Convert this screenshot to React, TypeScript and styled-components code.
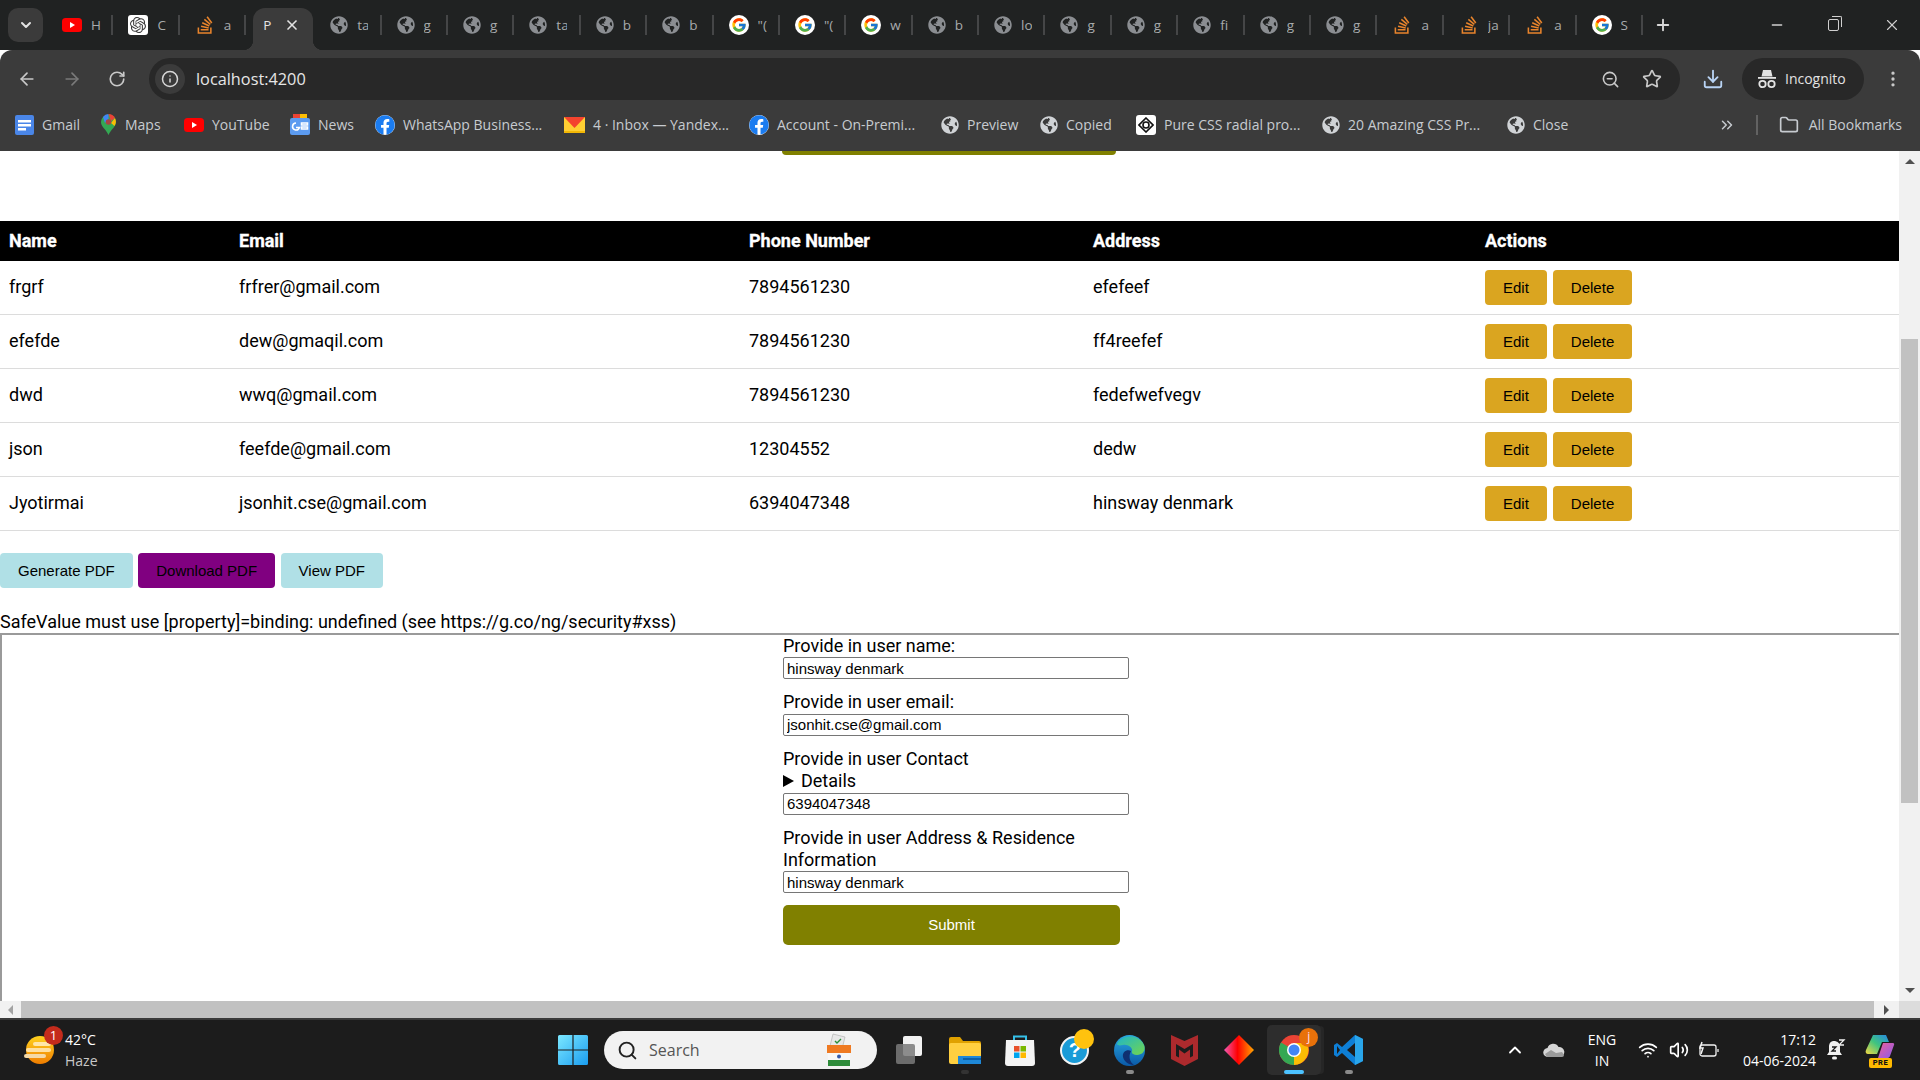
import React from "react";
import styled, { createGlobalStyle } from "styled-components";
import {
  ArrowLeft,
  ArrowRight,
  ChevronDown,
  ChevronUp,
  ChevronsRight,
  Download,
  Folder,
  Info,
  Minus,
  MoreVertical,
  Plus,
  RotateCw,
  Search,
  Star,
  Volume2,
  Wifi,
  X,
  ZoomOut,
} from "lucide-react";
import { FaFacebook, FaGlobeAmericas, FaStackOverflow } from "react-icons/fa";
import { FcGoogle } from "react-icons/fc";
import { SiOpenai } from "react-icons/si";

const GlobalStyle = createGlobalStyle`
  html, body {
    margin: 0;
    padding: 0;
    width: 1920px;
    height: 1080px;
    overflow: hidden;
    background: #fff;
  }
  * { box-sizing: border-box; }
  svg { flex-shrink: 0; }
`;

const Screen = styled.div`
  width: 1920px;
  height: 1080px;
  display: flex;
  flex-direction: column;
  font-family: Roboto, "Liberation Sans", sans-serif;
`;

/* ---------- browser chrome ---------- */

const TabStrip = styled.div`
  height: 50px;
  background: #202222;
  display: flex;
  align-items: flex-end;
  padding-left: 8px;
  flex-shrink: 0;
`;

const TabSearch = styled.div`
  width: 35px;
  height: 34px;
  margin: 0 4px 8px 0;
  border-radius: 10px;
  background: #3b3b3b;
  color: #e3e3e3;
  display: flex;
  align-items: center;
  justify-content: center;
`;

const Tab = styled.div`
  position: relative;
  width: 66.4px;
  height: 42px;
  display: flex;
  align-items: center;
  flex-shrink: 0;
  gap: 9px;
  padding-left: 15px;
  padding-bottom: 8px;
  font-family: "Open Sans", sans-serif;
  font-size: 13.5px;
  color: #a8abad;
  &::after {
    content: "";
    position: absolute;
    right: 0;
    top: 7px;
    width: 2px;
    height: 20px;
    background: #454647;
  }
`;

const ActiveTab = styled.div`
  position: relative;
  width: 60px;
  height: 42px;
  margin: 0 2px 0 7px;
  flex-shrink: 0;
  padding: 0 13px 8px 10px;
  display: flex;
  align-items: center;
  justify-content: space-between;
  background: #3b3b3b;
  border-radius: 12px 12px 0 0;
  color: #e3e3e3;
  font-family: "Open Sans", sans-serif;
  font-size: 13.5px;
  &::before,
  &::after {
    content: "";
    position: absolute;
    bottom: 0;
    width: 10px;
    height: 10px;
  }
  &::before {
    left: -10px;
    background: radial-gradient(circle at 0 0, transparent 10px, #3b3b3b 10.5px);
  }
  &::after {
    right: -10px;
    background: radial-gradient(circle at 100% 0, transparent 10px, #3b3b3b 10.5px);
  }
`;

const TabLabel = styled.span`
  width: 11px;
  overflow: hidden;
  white-space: nowrap;
`;

const NewTab = styled.div`
  width: 30px;
  height: 50px;
  margin-left: 5px;
  color: #d8d8d8;
  display: flex;
  align-items: center;
  justify-content: center;
`;

const WindowControls = styled.div`
  margin-left: auto;
  height: 50px;
  display: flex;
  align-items: center;
  color: #d0d0d0;
`;

const WindowButton = styled.div`
  width: 56px;
  display: flex;
  justify-content: center;
  &:last-child {
    margin-left: 3px;
  }
`;

const RestoreIcon = styled.div`
  position: relative;
  width: 11px;
  height: 12px;
  border: 1.5px solid #d0d0d0;
  border-radius: 2px;
  &::after {
    content: "";
    position: absolute;
    top: -4px;
    right: -4px;
    width: 9px;
    height: 10px;
    border-top: 1.5px solid #d0d0d0;
    border-right: 1.5px solid #d0d0d0;
    border-radius: 0 2px 0 0;
  }
`;

const Toolbar = styled.div`
  height: 50px;
  background: #3b3b3b;
  border-radius: 12px 12px 0 0;
  display: flex;
  align-items: flex-start;
  padding: 8px 0 0 4px;
  flex-shrink: 0;
`;

const NavButton = styled.div<{ $dim?: boolean }>`
  width: 45px;
  height: 42px;
  display: flex;
  align-items: center;
  justify-content: center;
  color: ${(p) => (p.$dim ? "#7a7a7a" : "#c9c9c9")};
`;

const DownloadButton = styled(NavButton)`
  margin-left: 10px;
`;

const MenuButton = styled(NavButton)`
  width: 56px;
  padding-left: 2px;
`;

const AddressBar = styled.div`
  width: 1531px;
  height: 42px;
  margin-left: 10px;
  background: #282828;
  border-radius: 21px;
  display: flex;
  align-items: center;
  padding: 0 18px 0 6px;
  color: #e3e3e3;
`;

const InfoPill = styled.div`
  width: 30px;
  height: 30px;
  border-radius: 50%;
  background: #3b3b3b;
  display: flex;
  align-items: center;
  justify-content: center;
  color: #d8d8d8;
`;

const UrlText = styled.span`
  margin-left: 11px;
  font-family: "Open Sans", sans-serif;
  font-size: 16.3px;
  color: #e6e6e6;
`;

const AddressActions = styled.div`
  margin-left: auto;
  display: flex;
  gap: 22px;
  color: #c9c9c9;
  align-items: center;
`;

const IncognitoPill = styled.div`
  width: 122px;
  height: 42px;
  margin-left: 7px;
  padding: 0 0 1px 15px;
  background: #282828;
  border-radius: 21px;
  display: flex;
  align-items: center;
  gap: 8px;
  color: #e3e3e3;
  font-family: "Open Sans", sans-serif;
  font-size: 14px;
`;

const BookmarkBar = styled.div`
  height: 51px;
  background: #3b3b3b;
  display: flex;
  align-items: center;
  padding-left: 15px;
  flex-shrink: 0;
  font-family: "Open Sans", sans-serif;
  font-size: 14px;
  color: #c7cbd0;
  padding-bottom: 2px;
`;

const Bookmark = styled.div<{ $w: number }>`
  width: ${(p) => p.$w}px;
  display: flex;
  align-items: center;
  gap: 8px;
  white-space: nowrap;
  flex-shrink: 0;
`;

const BookmarkEnd = styled.div`
  margin-left: auto;
  display: flex;
  align-items: center;
  padding-right: 18px;
  gap: 10px;
`;

const BarDivider = styled.div`
  width: 2px;
  height: 20px;
  background: #626262;
  margin: 0 11px 0 10px;
`;

const WhiteChip = styled.span<{ $round?: boolean }>`
  width: 20px;
  height: 20px;
  background: #fff;
  border-radius: ${(p) => (p.$round ? "50%" : "3px")};
  display: inline-flex;
  align-items: center;
  justify-content: center;
  flex-shrink: 0;
`;

/* ---------- page ---------- */

const Viewport = styled.div`
  height: 850px;
  display: flex;
  flex-shrink: 0;
`;

const Page = styled.div`
  width: 1899px;
  height: 850px;
  overflow: hidden;
  background: #fff;
  color: #000;
`;

const CutOffButton = styled.div`
  width: 334px;
  height: 4px;
  margin-left: 782px;
  background: #808000;
  border-radius: 0 0 4px 4px;
`;

const Table = styled.table`
  width: 1899px;
  margin-top: 66px;
  border-collapse: separate;
  border-spacing: 0;
  table-layout: fixed;
  font-size: 18px;
`;

const HeadCell = styled.th`
  height: 40px;
  background: #000;
  color: #fff;
  text-align: left;
  font-weight: 700;
  padding: 0 8px 1px;
  -webkit-text-stroke: 0.3px #fff;
  &:first-child {
    padding-left: 9px;
  }
`;

const Cell = styled.td`
  height: 54px;
  padding: 0 8px 2px;
  border-bottom: 1px solid #dcdcdc;
  &:first-child {
    padding-left: 9px;
  }
`;

const ActionCell = styled(Cell)`
  padding-bottom: 0;
`;

const Row = styled.tr``;

const ButtonBase = styled.button`
  height: 35px;
  padding: 0 18px;
  border: none;
  border-radius: 4px;
  font-family: "Liberation Sans", Arial, sans-serif;
  font-size: 15px;
  color: #000;
  vertical-align: middle;
`;

const ActionButton = styled(ButtonBase)`
  background: #daa520;
  & + & {
    margin-left: 6px;
  }
`;

const PdfRow = styled.div`
  display: flex;
  gap: 5.5px;
  margin-top: 22px;
`;

const PdfButton = styled(ButtonBase)<{ $tone: "blue" | "purple" }>`
  background: ${(p) => (p.$tone === "purple" ? "#800080" : "#b0e0e6")};
`;

const SafeValue = styled.div`
  margin-top: 22px;
  font-size: 18px;
  line-height: 23px;
  height: 23px;
  white-space: nowrap;
`;

const FrameBox = styled.div`
  height: 400px;
  border-top: 2px solid #9a9a9a;
  border-left: 2px solid #9a9a9a;
  padding-left: 781px;
  font-size: 18px;
`;

const Form = styled.form`
  width: 346px;
`;

const Field = styled.div`
  margin-bottom: 12px;
`;

const Label = styled.div`
  line-height: 22.4px;
`;

const DetailsLine = styled.div`
  display: flex;
  align-items: center;
  gap: 7px;
  line-height: 22.4px;
  &::before {
    content: "";
    width: 0;
    height: 0;
    border-left: 11px solid #000;
    border-top: 6px solid transparent;
    border-bottom: 6px solid transparent;
  }
`;

const TextInput = styled.input`
  display: block;
  width: 346px;
  height: 22px;
  padding: 1px 3px;
  border: 1px solid #767676;
  border-radius: 2px;
  font-family: "Liberation Sans", Arial, sans-serif;
  font-size: 15px;
  color: #000;
  background: #fff;
`;

const SubmitButton = styled.button`
  width: 337px;
  height: 40px;
  padding: 0 0 2px;
  border: none;
  border-radius: 5px;
  background: #808000;
  color: #fff;
  font-family: "Liberation Sans", Arial, sans-serif;
  font-size: 15px;
`;

const VScroll = styled.div`
  width: 21px;
  background: #f1f1f1;
  display: flex;
  flex-direction: column;
  align-items: center;
`;

const ArrowBox = styled.div`
  height: 21px;
  flex-shrink: 0;
  display: flex;
  align-items: center;
  justify-content: center;
  width: 21px;
`;

const VThumb = styled.div`
  width: 17px;
  height: 464px;
  margin-top: 167px;
  background: #c1c1c1;
`;

const VSpacer = styled.div`
  flex: 1;
`;

const Triangle = styled.div<{ $dir: "up" | "down" | "left" | "right" }>`
  width: 0;
  height: 0;
  ${(p) =>
    p.$dir === "up"
      ? "border-left:5px solid transparent;border-right:5px solid transparent;border-bottom:5px solid #505050;"
      : p.$dir === "down"
        ? "border-left:5px solid transparent;border-right:5px solid transparent;border-top:5px solid #505050;"
        : p.$dir === "left"
          ? "border-top:5px solid transparent;border-bottom:5px solid transparent;border-right:5px solid #a3a3a3;"
          : "border-top:5px solid transparent;border-bottom:5px solid transparent;border-left:5px solid #505050;"}
`;

const HScroll = styled.div`
  height: 17px;
  flex-shrink: 0;
  display: flex;
  background: #f1f1f1;
`;

const HThumb = styled.div`
  width: 1853px;
  background: #c1c1c1;
`;

const HArrow = styled.div<{ $w: number }>`
  width: ${(p) => p.$w}px;
  display: flex;
  align-items: center;
  justify-content: center;
`;

const ScrollCorner = styled.div`
  width: 21px;
  background: #dcdcdc;
`;

/* ---------- taskbar ---------- */

const Taskbar = styled.div`
  height: 62px;
  flex-shrink: 0;
  background: #1c1c1c;
  border-top: 2px solid #3a3a3a;
  display: flex;
  align-items: center;
  color: #fff;
  font-family: "Open Sans", sans-serif;
`;

const WeatherBlock = styled.div`
  width: 545px;
  padding-left: 24px;
  display: flex;
  align-items: center;
  gap: 11px;
  flex-shrink: 0;
`;

const WeatherIcon = styled.div`
  position: relative;
  width: 30px;
  height: 34px;
`;

const CountBadge = styled.span`
  position: absolute;
  top: -7px;
  right: -9px;
  width: 19px;
  height: 19px;
  border-radius: 50%;
  background: #c42b1c;
  color: #fff;
  font-size: 13px;
  line-height: 19px;
  text-align: center;
`;

const WeatherText = styled.div`
  font-size: 14px;
  line-height: 21px;
  color: #fff;
`;

const Muted = styled.div`
  color: #c8c8c8;
`;

const StartSlot = styled.div`
  width: 55px;
  display: flex;
  justify-content: center;
`;

const SearchPill = styled.div`
  width: 273px;
  height: 38px;
  margin: 0 6px 0 4px;
  background: #f2f2f2;
  border-radius: 19px;
  display: flex;
  align-items: center;
  padding: 0 24px 0 13px;
  gap: 11px;
  color: #555;
  font-size: 16px;
`;

const SearchArt = styled.div`
  margin-left: auto;
  display: flex;
`;

const TaskSlot = styled.div<{ $open?: boolean }>`
  position: relative;
  width: 54.8px;
  height: 50px;
  display: flex;
  align-items: center;
  justify-content: center;
  border-radius: 5px;
  ${(p) => (p.$open ? "background:#2d2d2d;box-shadow:4px 0 0 -1px #262626;" : "")}
`;

const RunDot = styled.span<{ $kind?: "active" | "faint" }>`
  position: absolute;
  bottom: 1px;
  left: 50%;
  transform: translateX(-50%);
  width: ${(p) => (p.$kind === "active" ? "20px" : "8px")};
  height: 4px;
  border-radius: 2px;
  background: ${(p) => (p.$kind === "active" ? "#4cc2ff" : p.$kind === "faint" ? "#333" : "#8a8a8a")};
`;

const HelpMark = styled.span`
  width: 29px;
  height: 29px;
  border-radius: 50%;
  border: 2px solid #f3f3f3;
  background: #1a9bd7;
  color: #fff;
  font-weight: 700;
  font-size: 20px;
  line-height: 25px;
  text-align: center;
  font-family: "Liberation Sans", sans-serif;
`;

const YellowDot = styled.span`
  position: absolute;
  top: 4px;
  right: 8px;
  width: 20px;
  height: 20px;
  border-radius: 50%;
  background: #ffc20e;
`;

const ProfileBadge = styled.span`
  position: absolute;
  top: 3px;
  right: 3px;
  width: 19px;
  height: 19px;
  border-radius: 50%;
  background: #e8710a;
  color: #fde;
  font-size: 12px;
  line-height: 18px;
  text-align: center;
`;

const Tray = styled.div`
  margin-left: auto;
  width: 420px;
  height: 100%;
  display: flex;
  align-items: center;
  flex-shrink: 0;
`;

const TrayIcon = styled.div<{ $w: number }>`
  width: ${(p) => p.$w}px;
  display: flex;
  justify-content: center;
  flex-shrink: 0;
`;

const LangBlock = styled.div`
  width: 48px;
  text-align: center;
  font-size: 14px;
  line-height: 21px;
`;

const ClockBlock = styled.div`
  width: 86px;
  text-align: right;
  font-size: 14px;
  line-height: 21px;
`;

const CopilotBox = styled.div`
  position: relative;
  width: 30px;
  height: 32px;
`;

const PreBadge = styled.span`
  position: absolute;
  left: 4px;
  bottom: -2px;
  width: 23px;
  height: 10px;
  border-radius: 2px;
  background: #ffb900;
  color: #111;
  font-size: 7.5px;
  font-weight: 800;
  line-height: 10px;
  letter-spacing: 0.6px;
  text-align: center;
  font-family: Roboto, sans-serif;
`;

/* ---------- drawings ---------- */

const Globe = () => <FaGlobeAmericas size={18} color="#d0d3d6" />;
const DimGlobe = () => <FaGlobeAmericas size={18} color="#8b8e92" />;

const Google = () => (
  <WhiteChip $round>
    <FcGoogle size={16} />
  </WhiteChip>
);

const YouTube = () => (
  <svg width="20" height="14" viewBox="0 0 20 14">
    <rect width="20" height="14" rx="3.5" fill="#f00" />
    <path d="M8 4l5 3-5 3z" fill="#fff" />
  </svg>
);

const OpenAi = () => (
  <WhiteChip>
    <SiOpenai size={16} color="#3b3b3b" />
  </WhiteChip>
);

const Stack = () => <FaStackOverflow size={20} color="#e8842c" />;

const Facebook = () => (
  <WhiteChip $round>
    <FaFacebook size={20} color="#1b7cf0" />
  </WhiteChip>
);

const DocsIcon = () => (
  <svg width="19" height="20" viewBox="0 0 19 20">
    <rect width="19" height="20" rx="2" fill="#4a86e8" />
    <path d="M3 5h13v2.4H3zM3 9h13v2.4H3zM3 13h8v2.4H3z" fill="#fff" />
  </svg>
);

const MapsIcon = () => (
  <svg width="17" height="21" viewBox="0 0 17 21">
    <path d="M8.5 21C6 15 1 13 1 8a7.5 7.5 0 0 1 15 0c0 5-5 7-7.5 13z" fill="#34a853" />
    <path d="M3 3a7.5 7.5 0 0 1 5.5-3v5L5 9z" fill="#4285f4" />
    <path d="M8.5 0A7.5 7.5 0 0 1 15 4l-4 3z" fill="#ea4335" />
    <path d="M15 4c1.5 3 1 5.5-.5 8L11 9z" fill="#fbbc04" />
    <circle cx="8.5" cy="8" r="2.8" fill="#a44" />
  </svg>
);

const NewsIcon = () => (
  <svg width="20" height="21" viewBox="0 0 20 21">
    <path d="M3 0h14v8H3z" fill="#34a853" />
    <path d="M3 0h7v4H3z" fill="#ea4335" />
    <path d="M10 0h7v4h-7z" fill="#fbbc04" />
    <rect y="4" width="20" height="17" rx="2" fill="#5c9bf0" />
    <path d="M11.5 9h6v2h-6zM11.5 13h6v2h-6zM6 9a3.5 3.5 0 1 0 3.4 4.5H6" fill="none" stroke="#fff" strokeWidth="1.6" />
  </svg>
);

const YandexMail = () => (
  <svg width="21" height="16" viewBox="0 0 21 16">
    <rect width="21" height="16" fill="#ffcf33" />
    <path d="M0 0h21L10.5 11z" fill="#f4442e" />
    <path d="M0 14h21v2H0z" fill="#f2b705" />
  </svg>
);

const PureCss = () => (
  <WhiteChip>
    <svg width="16" height="16" viewBox="0 0 16 16" fill="none" stroke="#111" strokeWidth="1.6">
      <path d="M8 1l7 7-7 7-7-7z" />
      <circle cx="8" cy="8" r="3" />
    </svg>
  </WhiteChip>
);

const IncognitoIcon = () => (
  <svg width="20" height="20" viewBox="0 0 20 20" fill="#e3e3e3">
    <path d="M6 1h8l1.5 6.5h-11z" />
    <rect x="1" y="8" width="18" height="1.8" />
    <circle cx="5.5" cy="15" r="3.2" fill="none" stroke="#e3e3e3" strokeWidth="1.8" />
    <circle cx="14.5" cy="15" r="3.2" fill="none" stroke="#e3e3e3" strokeWidth="1.8" />
  </svg>
);

const WeatherArt = () => (
  <svg width="30" height="34" viewBox="0 0 30 34">
    <defs>
      <linearGradient id="sun" x1="0" y1="0" x2="0" y2="1">
        <stop offset="0" stopColor="#ffd21f" />
        <stop offset="1" stopColor="#ef7d00" />
      </linearGradient>
    </defs>
    <circle cx="16" cy="17" r="14" fill="url(#sun)" />
    <rect x="9" y="9" width="18" height="4" rx="2" fill="#ffe6a8" />
    <rect x="2" y="15" width="25" height="4" rx="2" fill="#ffe0a0" />
    <rect x="0" y="21" width="22" height="4" rx="2" fill="#f5d9a6" />
  </svg>
);

const WinLogo = () => (
  <svg width="30" height="30" viewBox="0 0 30 30">
    <defs>
      <linearGradient id="win" x1="0" y1="0" x2="1" y2="1">
        <stop offset="0" stopColor="#7ce8ff" />
        <stop offset="1" stopColor="#1a9df0" />
      </linearGradient>
    </defs>
    <path d="M0 1.5A1.5 1.5 0 0 1 1.5 0H14.4V14.4H0zM15.6 0H28.5A1.5 1.5 0 0 1 30 1.5V14.4H15.6zM0 15.6H14.4V30H1.5A1.5 1.5 0 0 1 0 28.5zM15.6 15.6H30V28.5A1.5 1.5 0 0 1 28.5 30H15.6z" fill="url(#win)" />
  </svg>
);

const BallotBox = () => (
  <svg width="28" height="34" viewBox="0 0 28 34">
    <path d="M8 1l12 3-3 12-12-3z" fill="#e8e8e8" stroke="#aaa" strokeWidth=".6" />
    <path d="M10 8l2 2 4-4" stroke="#2a8f3a" strokeWidth="1.4" fill="none" />
    <rect x="2" y="12" width="24" height="8" fill="#ef7a22" />
    <rect x="3" y="20" width="22" height="7" fill="#f7f7f7" />
    <rect x="3" y="27" width="22" height="6" fill="#2e8b3a" />
    <circle cx="14" cy="23.5" r="2" fill="#3558a8" />
  </svg>
);

const TaskView = () => (
  <svg width="30" height="30" viewBox="0 0 30 30">
    <rect x="8" y="1" width="19" height="20" rx="2" fill="#f2f2f2" />
    <rect x="1" y="9" width="19" height="20" rx="2" fill="#7a7a7a" fillOpacity=".85" />
  </svg>
);

const ExplorerIcon = () => (
  <svg width="32" height="28" viewBox="0 0 32 28">
    <path d="M0 3a2 2 0 0 1 2-2h9l3 4h16a2 2 0 0 1 2 2v3H0z" fill="#e0a100" />
    <rect y="7" width="32" height="21" rx="2" fill="#ffcf40" />
    <rect x="9" y="20" width="23" height="8" fill="#1e88d8" />
    <rect x="14" y="22" width="18" height="2" fill="#0a5fa8" />
  </svg>
);

const StoreIcon = () => (
  <svg width="30" height="32" viewBox="0 0 30 32">
    <path d="M9 6V2.5h12V6" fill="none" stroke="#35c0e8" strokeWidth="2" />
    <path d="M1 6h28l1 23a3 3 0 0 1-3 3H3a3 3 0 0 1-3-3z" fill="#f4f4f4" />
    <rect x="9" y="12" width="5.5" height="5.5" fill="#e8502a" />
    <rect x="15.5" y="12" width="5.5" height="5.5" fill="#7ab800" />
    <rect x="9" y="18.5" width="5.5" height="5.5" fill="#00a4ef" />
    <rect x="15.5" y="18.5" width="5.5" height="5.5" fill="#ffb900" />
  </svg>
);

const EdgeIcon = () => (
  <svg width="31" height="31" viewBox="0 0 31 31">
    <defs>
      <linearGradient id="edgeA" x1="0" y1="0" x2="0" y2="1">
        <stop offset="0" stopColor="#2aa8e0" />
        <stop offset="1" stopColor="#0a5aa8" />
      </linearGradient>
      <linearGradient id="edgeB" x1="0" y1="0" x2="1" y2="1">
        <stop offset="0" stopColor="#1fb6c8" />
        <stop offset="1" stopColor="#73d64c" />
      </linearGradient>
    </defs>
    <circle cx="15.5" cy="15.5" r="15.5" fill="url(#edgeA)" />
    <path d="M3 9C7 0 24-2 30 10c2 5-1 10-7 10-4 0-6-2-5-4 1-3-4-7-9-6-3 .5-5 1-6-1z" fill="url(#edgeB)" />
    <path d="M17 16c-4-2-9 1-8 6 1 4 5 8 11 8-4-3-6-8-3-14z" fill="#0f2f70" />
  </svg>
);

const McafeeIcon = () => (
  <svg width="27" height="31" viewBox="0 0 27 31">
    <path
      fillRule="evenodd"
      d="M0 0l13.5 6L27 0v24l-13.5 7L0 24zM5 9v12l3 1.5v-8l5.5 4 5.5-4v8L22 21V9l-8.5 5z"
      fill="#ad2a2d"
    />
  </svg>
);

const DiamondIcon = () => (
  <svg width="30" height="30" viewBox="0 0 30 30">
    <defs>
      <linearGradient id="dia" x1="0" y1="0" x2="1" y2="0">
        <stop offset="0" stopColor="#f15bb5" />
        <stop offset=".45" stopColor="#f00" />
        <stop offset="1" stopColor="#ffa600" />
      </linearGradient>
    </defs>
    <path d="M15 0l15 15-15 15L0 15z" fill="url(#dia)" />
  </svg>
);

const ChromeIcon = () => (
  <svg width="30" height="30" viewBox="0 0 30 30">
    <circle cx="15" cy="15" r="15" fill="#ea4335" />
    <path d="M15 15L2 7.5A15 15 0 0 0 15 30l6-6z" fill="#34a853" />
    <path d="M15 8h12.8A15 15 0 0 1 15 30z" fill="#fbbc04" />
    <circle cx="15" cy="15" r="7" fill="#fff" />
    <circle cx="15" cy="15" r="5.5" fill="#4285f4" />
  </svg>
);

const VsCodeIcon = () => (
  <svg width="30" height="30" viewBox="0 0 30 30">
    <path d="M21 0l8 4v22l-8 4L8 18l-5 4-3-2V10l3-2 5 4z" fill="#0e7fd6" />
    <path d="M21 0l8 4v22l-8 4z" fill="#29a5ea" />
    <path d="M21 8v14l-8-7z" fill="#1c1c1c" />
    <path d="M3 11l3 4-3 4z" fill="#1c1c1c" />
  </svg>
);

const CloudIcon = () => (
  <svg width="22" height="14" viewBox="0 0 22 14">
    <path d="M5 14a4.5 4.5 0 0 1-.5-9A6 6 0 0 1 15.5 4 5 5 0 0 1 17 14z" fill="#d6d6d6" />
    <path d="M2 11l6-4 5 3 6-1 2 3a2 2 0 0 1-2 2H4z" fill="#9a9a9a" />
  </svg>
);

const BatteryIcon = () => (
  <svg width="22" height="18" viewBox="0 0 22 18" fill="none" stroke="#f2f2f2" strokeWidth="1.3">
    <rect x="2" y="4" width="16" height="11" rx="2" />
    <path d="M20 8v3" />
    <path d="M4 1L2 7h3l-2 6" strokeWidth="1.5" />
  </svg>
);

const BellIcon = () => (
  <svg width="20" height="22" viewBox="0 0 20 22" fill="#f2f2f2">
    <path d="M8 2c-3 0-5 2-5 6v5l-2 3h15l-2-3V8c0-4-3-6-6-6z" />
    <rect x="6" y="17.5" width="5" height="3" rx="1.5" />
    <path d="M6 8h4l-4 4h4" stroke="#1c1c1c" strokeWidth="1.3" fill="none" />
    <path d="M13 1h5l-5 5h5" stroke="#f2f2f2" strokeWidth="1.3" fill="none" />
  </svg>
);

const CopilotIcon = () => (
  <svg width="30" height="26" viewBox="0 0 30 26">
    <defs>
      <linearGradient id="cpA" x1="0" y1="1" x2="1" y2="0">
        <stop offset="0" stopColor="#f5d742" />
        <stop offset=".5" stopColor="#3fc47f" />
        <stop offset="1" stopColor="#2487e8" />
      </linearGradient>
      <linearGradient id="cpB" x1="0" y1="0" x2="1" y2="1">
        <stop offset="0" stopColor="#ee5f9c" />
        <stop offset="1" stopColor="#8a5be8" />
      </linearGradient>
    </defs>
    <path d="M8 1h13l3 7h-7l-5 12H3C1 20 0 18 1 16z" fill="url(#cpA)" />
    <path d="M18 9h10c1 0 1.5 1 1 2l-4 11c-.5 1.5-1.5 2-3 2h-9z" fill="url(#cpB)" />
  </svg>
);

/* ---------- data ---------- */

type Fav = "yt" | "ai" | "so" | "globe" | "g";

const tabs: { fav: Fav; label: string; active?: boolean }[] = [
  { fav: "yt", label: "H" },
  { fav: "ai", label: "C" },
  { fav: "so", label: "a" },
  { fav: "globe", label: "P", active: true },
  { fav: "globe", label: "ta" },
  { fav: "globe", label: "g" },
  { fav: "globe", label: "g" },
  { fav: "globe", label: "ta" },
  { fav: "globe", label: "b" },
  { fav: "globe", label: "b" },
  { fav: "g", label: "\"(" },
  { fav: "g", label: "\"(" },
  { fav: "g", label: "w" },
  { fav: "globe", label: "b" },
  { fav: "globe", label: "lo" },
  { fav: "globe", label: "g" },
  { fav: "globe", label: "g" },
  { fav: "globe", label: "fi" },
  { fav: "globe", label: "g" },
  { fav: "globe", label: "g" },
  { fav: "so", label: "a" },
  { fav: "so", label: "ja" },
  { fav: "so", label: "a" },
  { fav: "g", label: "S" },
];

const favicon = (fav: Fav) => {
  if (fav === "yt") return <YouTube />;
  if (fav === "ai") return <OpenAi />;
  if (fav === "so") return <Stack />;
  if (fav === "g") return <Google />;
  return <DimGlobe />;
};

const bookmarks: { icon: React.ReactNode; label: string; w: number }[] = [
  { icon: <DocsIcon />, label: "Gmail", w: 85 },
  { icon: <MapsIcon />, label: "Maps", w: 84 },
  { icon: <YouTube />, label: "YouTube", w: 106 },
  { icon: <NewsIcon />, label: "News", w: 85 },
  { icon: <Facebook />, label: "WhatsApp Business...", w: 189 },
  { icon: <YandexMail />, label: "4 · Inbox — Yandex...", w: 185 },
  { icon: <Facebook />, label: "Account - On-Premi...", w: 192 },
  { icon: <Globe />, label: "Preview", w: 99 },
  { icon: <Globe />, label: "Copied", w: 96 },
  { icon: <PureCss />, label: "Pure CSS radial pro...", w: 186 },
  { icon: <Globe />, label: "20 Amazing CSS Pr...", w: 185 },
  { icon: <Globe />, label: "Close", w: 80 },
];

const people = [
  { name: "frgrf", email: "frfrer@gmail.com", phone: "7894561230", address: "efefeef" },
  { name: "efefde", email: "dew@gmaqil.com", phone: "7894561230", address: "ff4reefef" },
  { name: "dwd", email: "wwq@gmail.com", phone: "7894561230", address: "fedefwefvegv" },
  { name: "json", email: "feefde@gmail.com", phone: "12304552", address: "dedw" },
  { name: "Jyotirmai", email: "jsonhit.cse@gmail.com", phone: "6394047348", address: "hinsway denmark" },
];

const columnWidths = [231, 510, 344, 392, 422];

export default function App() {
  return (
    <Screen>
      <GlobalStyle />
      <TabStrip>
        <TabSearch>
          <ChevronDown size={16} strokeWidth={3} />
        </TabSearch>
        {tabs.map((t, i) =>
          t.active ? (
            <ActiveTab key={i}>
              <span>{t.label}</span>
              <X size={16} strokeWidth={2.5} />
            </ActiveTab>
          ) : (
            <Tab key={i}>
              {favicon(t.fav)}
              <TabLabel>{t.label}</TabLabel>
            </Tab>
          ),
        )}
        <NewTab>
          <Plus size={18} strokeWidth={2.5} />
        </NewTab>
        <WindowControls>
          <WindowButton>
            <Minus size={16} />
          </WindowButton>
          <WindowButton>
            <RestoreIcon />
          </WindowButton>
          <WindowButton>
            <X size={18} strokeWidth={1.5} />
          </WindowButton>
        </WindowControls>
      </TabStrip>

      <Toolbar>
        <NavButton>
          <ArrowLeft size={20} />
        </NavButton>
        <NavButton $dim>
          <ArrowRight size={20} />
        </NavButton>
        <NavButton>
          <RotateCw size={18} strokeWidth={2.2} />
        </NavButton>
        <AddressBar>
          <InfoPill>
            <Info size={18} />
          </InfoPill>
          <UrlText>localhost:4200</UrlText>
          <AddressActions>
            <ZoomOut size={19} />
            <Star size={20} />
          </AddressActions>
        </AddressBar>
        <DownloadButton>
          <Download size={22} color="#b9d4f5" />
        </DownloadButton>
        <IncognitoPill>
          <IncognitoIcon />
          Incognito
        </IncognitoPill>
        <MenuButton>
          <MoreVertical size={20} />
        </MenuButton>
      </Toolbar>

      <BookmarkBar>
        {bookmarks.map((b) => (
          <Bookmark key={b.label} $w={b.w}>
            {b.icon}
            <span>{b.label}</span>
          </Bookmark>
        ))}
        <BookmarkEnd>
          <ChevronsRight size={18} />
          <BarDivider />
          <Folder size={20} />
          <span>All Bookmarks</span>
        </BookmarkEnd>
      </BookmarkBar>

      <Viewport>
        <Page>
          <CutOffButton />
          <Table>
            <colgroup>
              {columnWidths.map((w) => (
                <col key={w} width={w} />
              ))}
            </colgroup>
            <thead>
              <Row>
                <HeadCell>Name</HeadCell>
                <HeadCell>Email</HeadCell>
                <HeadCell>Phone Number</HeadCell>
                <HeadCell>Address</HeadCell>
                <HeadCell>Actions</HeadCell>
              </Row>
            </thead>
            <tbody>
              {people.map((p) => (
                <Row key={p.name}>
                  <Cell>{p.name}</Cell>
                  <Cell>{p.email}</Cell>
                  <Cell>{p.phone}</Cell>
                  <Cell>{p.address}</Cell>
                  <ActionCell>
                    <ActionButton>Edit</ActionButton>
                    <ActionButton>Delete</ActionButton>
                  </ActionCell>
                </Row>
              ))}
            </tbody>
          </Table>

          <PdfRow>
            <PdfButton $tone="blue">Generate PDF</PdfButton>
            <PdfButton $tone="purple">Download PDF</PdfButton>
            <PdfButton $tone="blue">View PDF</PdfButton>
          </PdfRow>

          <SafeValue>SafeValue must use [property]=binding: undefined (see https://g.co/ng/security#xss)</SafeValue>

          <FrameBox>
            <Form>
              <Field>
                <Label>Provide in user name:</Label>
                <TextInput readOnly value="hinsway denmark" />
              </Field>
              <Field>
                <Label>Provide in user email:</Label>
                <TextInput readOnly value="jsonhit.cse@gmail.com" />
              </Field>
              <Field>
                <Label>Provide in user Contact</Label>
                <DetailsLine>Details</DetailsLine>
                <TextInput readOnly value="6394047348" />
              </Field>
              <Field>
                <Label>
                  Provide in user Address &amp; Residence
                  <br />
                  Information
                </Label>
                <TextInput readOnly value="hinsway denmark" />
              </Field>
              <SubmitButton type="button">Submit</SubmitButton>
            </Form>
          </FrameBox>
        </Page>
        <VScroll>
          <ArrowBox>
            <Triangle $dir="up" />
          </ArrowBox>
          <VThumb />
          <VSpacer />
          <ArrowBox>
            <Triangle $dir="down" />
          </ArrowBox>
        </VScroll>
      </Viewport>

      <HScroll>
        <HArrow $w={21}>
          <Triangle $dir="left" />
        </HArrow>
        <HThumb />
        <HArrow $w={25}>
          <Triangle $dir="right" />
        </HArrow>
        <ScrollCorner />
      </HScroll>

      <Taskbar>
        <WeatherBlock>
          <WeatherIcon>
            <WeatherArt />
            <CountBadge>1</CountBadge>
          </WeatherIcon>
          <WeatherText>
            42°C
            <Muted>Haze</Muted>
          </WeatherText>
        </WeatherBlock>
        <StartSlot>
          <WinLogo />
        </StartSlot>
        <SearchPill>
          <Search size={21} color="#222" strokeWidth={2.2} />
          Search
          <SearchArt>
            <BallotBox />
          </SearchArt>
        </SearchPill>
        <TaskSlot>
          <TaskView />
        </TaskSlot>
        <TaskSlot>
          <ExplorerIcon />
          <RunDot $kind="faint" />
        </TaskSlot>
        <TaskSlot>
          <StoreIcon />
        </TaskSlot>
        <TaskSlot>
          <HelpMark>?</HelpMark>
          <YellowDot />
        </TaskSlot>
        <TaskSlot>
          <EdgeIcon />
          <RunDot />
        </TaskSlot>
        <TaskSlot>
          <McafeeIcon />
        </TaskSlot>
        <TaskSlot>
          <DiamondIcon />
        </TaskSlot>
        <TaskSlot $open>
          <ChromeIcon />
          <ProfileBadge>j</ProfileBadge>
          <RunDot $kind="active" />
        </TaskSlot>
        <TaskSlot>
          <VsCodeIcon />
          <RunDot />
        </TaskSlot>
        <Tray>
          <TrayIcon $w={30}>
            <ChevronUp size={20} strokeWidth={2.2} />
          </TrayIcon>
          <TrayIcon $w={48}>
            <CloudIcon />
          </TrayIcon>
          <LangBlock>
            ENG
            <br />
            IN
          </LangBlock>
          <TrayIcon $w={44}>
            <Wifi size={20} />
          </TrayIcon>
          <TrayIcon $w={18}>
            <Volume2 size={20} />
          </TrayIcon>
          <TrayIcon $w={42}>
            <BatteryIcon />
          </TrayIcon>
          <ClockBlock>
            17:12
            <br />
            04-06-2024
          </ClockBlock>
          <TrayIcon $w={40}>
            <BellIcon />
          </TrayIcon>
          <TrayIcon $w={48}>
            <CopilotBox>
              <CopilotIcon />
              <PreBadge>PRE</PreBadge>
            </CopilotBox>
          </TrayIcon>
        </Tray>
      </Taskbar>
    </Screen>
  );
}
